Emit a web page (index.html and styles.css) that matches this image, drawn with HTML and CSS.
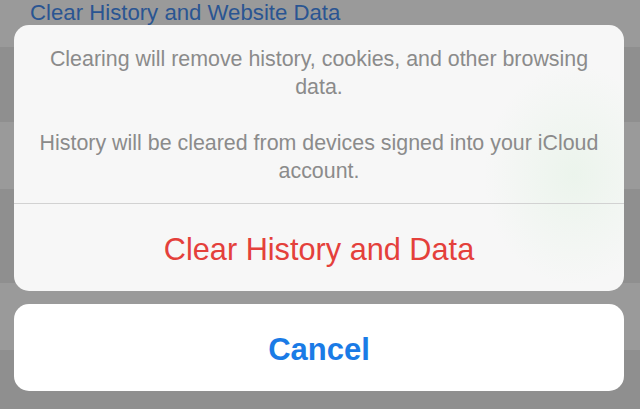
FILE: index.html
```html
<!DOCTYPE html>
<html lang="en">
<head>
<meta charset="utf-8">
<title>Clear History</title>
<link rel="stylesheet" href="styles.css">
</head>
<body>
<div class="screen">
  <div class="list">
    <div class="row row-light row-top"><span class="link">Clear History and Website Data</span></div>
    <div class="row row-dark r2"></div>
    <div class="row row-light r3"></div>
    <div class="row row-dark r4"></div>
    <div class="row row-light r5"></div>
    <div class="row row-dark r6"></div>
  </div>
  <div class="sheet">
    <div class="card group">
      <div class="message">
        <p>Clearing will remove history, cookies, and other browsing data.</p>
        <p>History will be cleared from devices signed into your iCloud account.</p>
      </div>
      <div class="action destructive">Clear History and Data</div>
    </div>
    <div class="card cancel">Cancel</div>
  </div>
</div>
</body>
</html>
```

FILE: styles.css
```css
html, body {
  margin: 0;
  padding: 0;
}
body {
  width: 640px;
  height: 409px;
  overflow: hidden;
  background: #8f8f8f;
  font-family: "Liberation Sans", Arial, sans-serif;
}
.screen {
  position: relative;
  width: 640px;
  height: 409px;
  overflow: hidden;
}
.list {
  display: flex;
  flex-direction: column;
}
.row-light { background: #9a9a9a; }
.row-dark { background: #8f8f8f; }
.row-top { height: 47px; }
.r2 { height: 75px; }
.r3 { height: 67px; }
.r4 { height: 94px; }
.r5 { height: 67px; }
.r6 { height: 59px; }
.link {
  display: block;
  padding-left: 30px;
  padding-top: 1px;
  font-size: 22.2px;
  line-height: 24px;
  color: #2a5592;
}
.sheet {
  position: absolute;
  left: 14px;
  top: 25px;
  width: 610px;
  display: flex;
  flex-direction: column;
  gap: 13px;
}
.card {
  border-radius: 15px;
  overflow: hidden;
}
.group {
  background: #f7f7f7;
  background-image: radial-gradient(ellipse 90px 110px at 560px 150px, rgba(226, 242, 227, 0.55), rgba(247, 247, 247, 0));
}
.message {
  height: 179px;
  box-sizing: border-box;
  padding: 20px 18px 0;
  border-bottom: 1px solid #d2d2d2;
  text-align: center;
  color: #8b8b8b;
  font-size: 21.4px;
  line-height: 28px;
}
.message p {
  margin: 0 0 28px;
}
.action {
  height: 87px;
  box-sizing: border-box;
  padding-top: 4px;
  display: flex;
  align-items: center;
  justify-content: center;
  font-size: 30.7px;
}
.destructive {
  color: #e4403b;
}
.cancel {
  background: #ffffff;
  height: 87px;
  box-sizing: border-box;
  padding-top: 4px;
  display: flex;
  align-items: center;
  justify-content: center;
  font-size: 31px;
  font-weight: bold;
  color: #1a7be6;
}
```
